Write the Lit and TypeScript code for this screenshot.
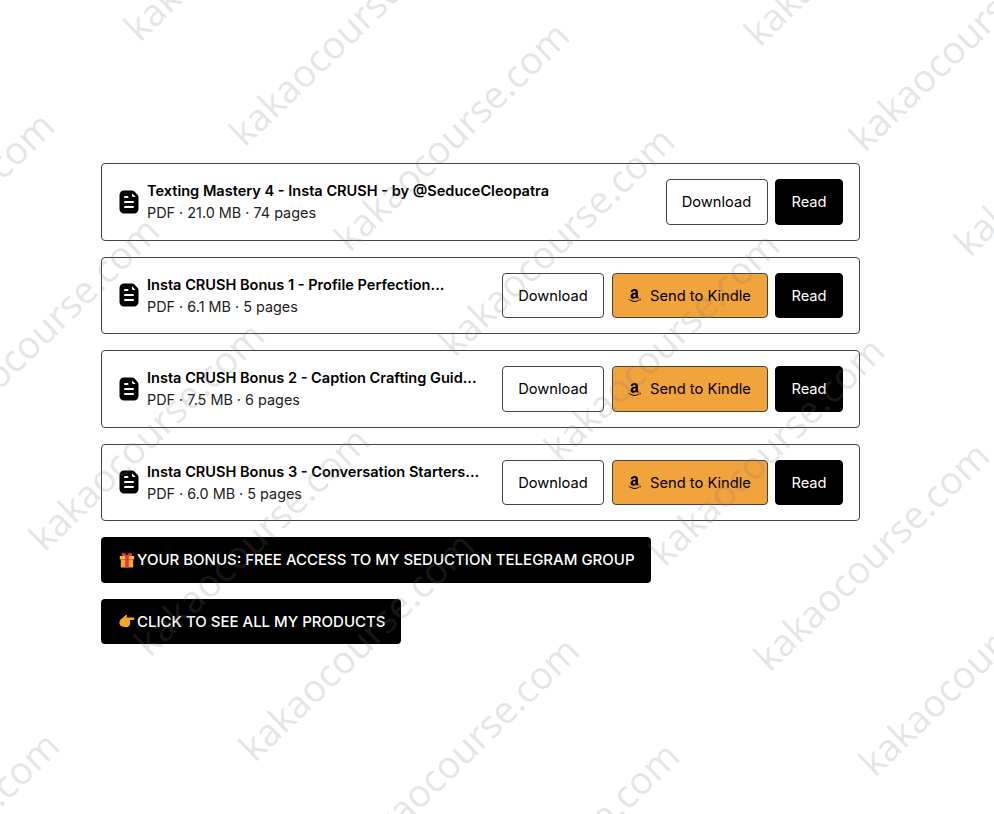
import { LitElement, html, css, svg } from 'lit';
import { customElement } from 'lit/decorators.js';

const files = [
  { title: 'Texting Mastery 4 - Insta CRUSH - by @SeduceCleopatra', meta: 'PDF · 21.0 MB · 74 pages', kindle: false },
  { title: 'Insta CRUSH Bonus 1 - Profile Perfection...', meta: 'PDF · 6.1 MB · 5 pages', kindle: true },
  { title: 'Insta CRUSH Bonus 2 - Caption Crafting Guid...', meta: 'PDF · 7.5 MB · 6 pages', kindle: true },
  { title: 'Insta CRUSH Bonus 3 - Conversation Starters...', meta: 'PDF · 6.0 MB · 5 pages', kindle: true },
];

// start point (lower left of the "k") of every watermark
const marks = [
  [20, -65], [125, 40], [230, 145], [335, 250], [440, 355], [545, 460], [650, 565], [755, 670], [860, 775],
  [-180, 340], [-75, 445], [30, 550], [135, 655], [240, 760], [345, 865], [445, 970],
  [745, 45], [850, 150], [955, 255],
  [-175, 960],
];

const fileIcon = svg`<svg class="doc" viewBox="0 0 20 24" width="20" height="24">
  <path fill="#000" d="M5 .5h8.2c.8 0 1.5.3 2 .8l3.5 3.6c.5.5.8 1.2.8 2V19c0 2.500-2 4.500-4.500 4.500H5C2.500 23.500.5 21.500.5 19V5C.5 2.500 2.500.5 5 .5z"/>
  <path fill="#fff" d="M13 3.300l3.600 3.700H14.200c-.7 0-1.200-.5-1.200-1.200z"/>
  <path stroke="#fff" stroke-width="2" stroke-linecap="round" d="M6 7h2.500M6 12h8M6 17h8"/>
</svg>`;

const amazonIcon = svg`<svg class="amazon" viewBox="0 0 448 512" width="13" height="15">
  <path fill="#000" d="M257.2 162.7c-48.7 1.8-169.5 15.5-169.5 117.500 0 109.500 138.300 114 183.500 43.200 6.500 10.200 35.400 37.500 45.300 46.800l56.800-56S341 288.900 341 261.400V114.300C341 89 316.500 32 228.700 32 140.700 32 94 87 94 136.300l73.500 6.800c16.300-49.500 54.200-49.500 54.200-49.500 40.700-.1 35.500 29.800 35.500 69.100zm0 86.800c0 80-84.200 68-84.200 17.200 0-47.200 50.500-56.700 84.200-57.800v40.600zm136 163.500c-7.700 10-70 67-174.500 67S34.200 408.500 9.700 379c-6.800-7.700 1-11.300 5.500-8.300C88.500 415.200 203 488.500 387.700 401c7.500-3.700 13.300 2 5.500 12zm39.800 2.200c-6.500 15.800-16 26.800-21.200 31-5.500 4.500-9.500 2.700-6.500-3.800s19.300-46.500 12.700-55c-6.500-8.300-37-4.300-48-3.200-10.800 1-13 2-14-.3-2.300-5.700 21.700-15.500 37.500-17.500 15.700-1.800 41-.8 46 5.700 3.700 5.100 0 27.100-6.500 43.100z"/>
</svg>`;

const giftIcon = svg`<svg class="emoji" viewBox="0 0 16 16" width="16" height="16">
  <path fill="#e0314f" d="M3.200 1.200C4.500.2 6.700 1.300 8 3.400 9.300 1.300 11.500.2 12.800 1.200c1.100 1 .4 2.700-1.500 3.300H4.700C2.800 3.900 2.100 2.200 3.200 1.200z"/>
  <rect x=".8" y="4" width="14.400" height="3.600" rx=".6" fill="#fdb92e"/>
  <rect x="1.800" y="7.400" width="12.400" height="8" rx=".6" fill="#f9a825"/>
  <rect x="6.200" y="4" width="3.600" height="11.400" fill="#e0314f"/>
</svg>`;

const handIcon = svg`<svg class="emoji" viewBox="0 0 16 16" width="16" height="16">
  <path fill="#f6a623" d="M.4 9.800c0-2 1-3.400 2.500-4.400L6.500 2.300c1-.8 2.200.4 1.400 1.400l-.6.9h7c1.500 0 1.500 2.300 0 2.300h-3.600c.5.600.5 1.300.2 1.800.5.500.5 1.200.1 1.800.3.600.1 1.200-.4 1.600-.3 1.200-1.200 1.800-2.300 1.800H5.300C2.400 14 .4 12.400.4 9.800z"/>
</svg>`;

@customElement('app-root')
export class AppRoot extends LitElement {
  static styles = css`
    :host {
      display: block;
      position: relative;
      height: 814px;
      overflow: hidden;
      background: #fff;
      color: #000;
      font-family: Inter, "Liberation Sans", sans-serif;
    }

    .content {
      display: flex;
      flex-direction: column;
      align-items: flex-start;
      gap: 16px;
      width: 759px;
      margin-left: 101px;
      padding-top: 163px;
    }

    .card {
      display: flex;
      align-items: center;
      justify-content: space-between;
      box-sizing: border-box;
      width: 100%;
      height: 77.500px;
      padding: 0 16px 0 17px;
      border: 1px solid #444;
      border-radius: 4px;
    }

    .info {
      display: flex;
      align-items: center;
      gap: 8px;
    }

    .doc {
      flex: none;
    }

    .text {
      padding-top: 2px;
    }

    .title {
      font-size: 14.550px;
      font-weight: 600;
      line-height: 21px;
      white-space: nowrap;
    }

    .meta {
      font-size: 14.400px;
      line-height: 22px;
      color: #222;
      white-space: nowrap;
    }

    .actions {
      display: flex;
      gap: 7.500px;
    }

    .btn {
      display: flex;
      align-items: center;
      justify-content: center;
      box-sizing: border-box;
      height: 45.500px;
      padding-top: 1px;
      border: 1px solid #444;
      border-radius: 4px;
      font-size: 14.700px;
      white-space: nowrap;
    }

    .download {
      width: 102px;
      background: #fff;
    }

    .kindle {
      width: 156px;
      gap: 9px;
      background: #f1a33c;
    }

    .read {
      width: 68px;
      background: #000;
      border-color: #000;
      color: #fff;
    }

    .cta {
      display: flex;
      align-items: center;
      gap: 2px;
      box-sizing: border-box;
      height: 45.500px;
      padding: 0 16px 0 18px;
      background: #000;
      border-radius: 4px;
      color: #fff;
      font-size: 15px;
      font-weight: 500;
      white-space: nowrap;
    }

    .marks {
      position: absolute;
      inset: 0;
      pointer-events: none;
    }

    .mark {
      position: absolute;
      transform-origin: 0 100%;
      transform: rotate(-44deg);
      font-family: "Open Sans", sans-serif;
      font-size: 37.800px;
      line-height: 1;
      color: rgba(120, 120, 120, 0.2);
      white-space: nowrap;
    }
  `;

  render() {
    return html`
      <div class="content">
        ${files.map((f) => html`
          <div class="card">
            <div class="info">
              ${fileIcon}
              <div class="text">
                <div class="title">${f.title}</div>
                <div class="meta">${f.meta}</div>
              </div>
            </div>
            <div class="actions">
              <div class="btn download">Download</div>
              ${f.kindle ? html`<div class="btn kindle">${amazonIcon}Send to Kindle</div>` : ''}
              <div class="btn read">Read</div>
            </div>
          </div>
        `)}
        <div class="cta">${giftIcon}YOUR BONUS: FREE ACCESS TO MY SEDUCTION TELEGRAM GROUP</div>
        <div class="cta">${handIcon}CLICK TO SEE ALL MY PRODUCTS</div>
      </div>
      <div class="marks">
        ${marks.map(([x, y]) => html`<span class="mark" style="left:${x + 18}px;top:${y - 31}px">kakaocourse.com</span>`)}
      </div>
    `;
  }
}
